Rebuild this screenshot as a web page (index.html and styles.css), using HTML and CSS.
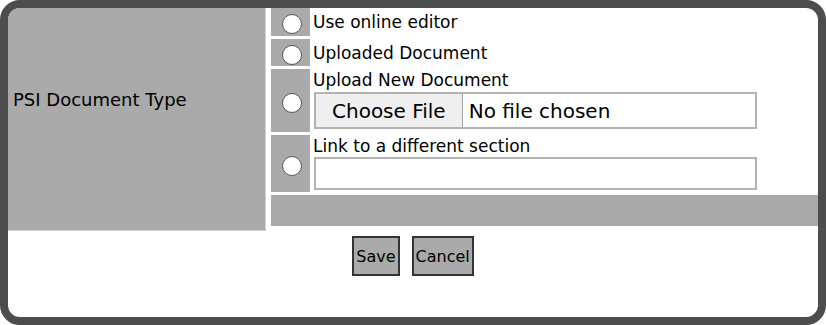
FILE: index.html
```html
<!DOCTYPE html>
<html lang="en">
<head>
  <meta charset="UTF-8">
  <title>PSI Document Type</title>
  <link rel="stylesheet" href="styles.css">
</head>
<body>
<div class="panel">
  <div class="doc-form">
    <div class="label-cell">PSI Document Type</div>

    <div class="options">
      <div class="radio-cell"><input type="radio" name="doctype" class="radio"></div>
      <div class="text-cell middle">Use online editor</div>

      <div class="radio-cell"><input type="radio" name="doctype" class="radio"></div>
      <div class="text-cell middle">Uploaded Document</div>

      <div class="radio-cell"><input type="radio" name="doctype" class="radio"></div>
      <div class="text-cell">
        <div class="opt-label">Upload New Document</div>
        <input type="file" class="file-input">
      </div>

      <div class="radio-cell"><input type="radio" name="doctype" class="radio"></div>
      <div class="text-cell">
        <div class="opt-label">Link to a different section</div>
        <input type="text" class="text-input">
      </div>

      <div class="footer-bar"></div>
    </div>
  </div>

  <div class="actions">
    <button class="btn">Save</button>
    <button class="btn">Cancel</button>
  </div>
</div>
</body>
</html>
```

FILE: styles.css
```css
* { margin: 0; padding: 0; box-sizing: border-box; }

body {
  font-family: "DejaVu Sans", sans-serif;
  color: #000;
  background: #fff;
}

.panel {
  width: 826px;
  height: 325px;
  border: 8px solid #4d4d4d;
  border-radius: 20px;
  background: #fff;
  overflow: hidden;
}

.doc-form {
  display: grid;
  grid-template-columns: 258px 1fr;
  column-gap: 5px;
  align-items: start;
}

.label-cell {
  height: 223px;
  background: #aaa;
  border-right: 1px solid #d2d2d2;
  border-bottom: 1px solid #d2d2d2;
  display: flex;
  align-items: center;
  padding: 0 0 40px 5px;
  font-size: 18px;
}

/* right side: radio column + content column */
.options {
  display: grid;
  grid-template-columns: 39px 1fr;
  grid-template-rows: 28px 27px 63px 57px 31px;
  column-gap: 2px;
  row-gap: 3px;
}

.radio-cell {
  background: #aaa;
  display: flex;
  align-items: center;
  justify-content: center;
}

.radio {
  appearance: none;
  width: 20px;
  height: 20px;
  margin: 4px 0 0 2px;
  border: 1px solid #555;
  border-radius: 50%;
  background: #fff;
}

.text-cell {
  font-size: 17px;
  padding-left: 1px;
}

.text-cell.middle {
  display: flex;
  align-items: center;
}

.opt-label {
  line-height: 22px;
}

.file-input {
  display: block;
  width: 443px;
  height: 37px;
  margin: 1px 0 0 1px;
  border: 2px solid #b3b3b3;
  background: #fff;
  font-family: "DejaVu Sans", sans-serif;
  font-size: 20px;
  color: #000;
}

.file-input::file-selector-button {
  height: 100%;
  padding: 0 16px;
  margin-right: 6px;
  border: none;
  border-right: 1px solid #a0a0a0;
  background: #efefef;
  font: inherit;
  color: #000;
}

.text-input {
  display: block;
  width: 443px;
  height: 33px;
  margin: 0 0 0 1px;
  border: 2px solid #b3b3b3;
  background: #fff;
  font-size: 17px;
}

.footer-bar {
  grid-column: 1 / 3;
  background: #aaa;
}

.actions {
  display: flex;
  justify-content: center;
  gap: 12px;
  margin-top: 5px;
}

.btn {
  height: 40px;
  padding: 0 2px;
  background: #aaa;
  border: 2px solid #333;
  font-family: "DejaVu Sans", sans-serif;
  font-size: 16px;
  color: #000;
}
```
